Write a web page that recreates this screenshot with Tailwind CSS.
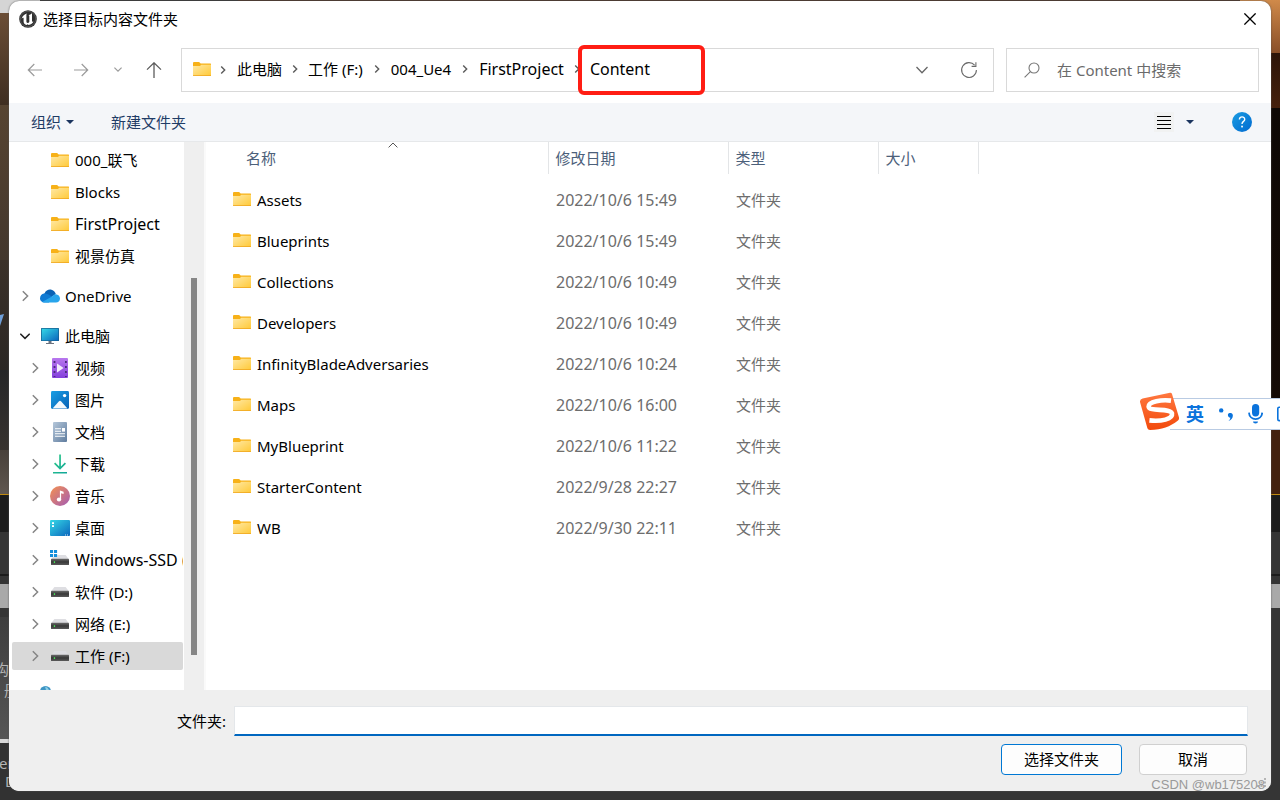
<!DOCTYPE html>
<html lang="zh-CN">
<head>
<meta charset="utf-8">
<meta name="viewport" content="width=device-width, initial-scale=1">
<title>选择目标内容文件夹</title>
<script src="https://cdn.jsdelivr.net/npm/@tailwindcss/browser@4"></script>
</head>
<body class="relative h-screen overflow-hidden bg-[#353535] font-['Noto_Sans','Noto_Sans_CJK_SC',sans-serif] text-[15px] leading-5 text-black">

<svg class="absolute size-0" aria-hidden="true">
  <defs>
    <linearGradient id="gFolder" x1="0" y1="0" x2="1" y2="1"><stop offset="0" stop-color="#ffe9a6"/><stop offset="1" stop-color="#ffc937"/></linearGradient>
    <linearGradient id="gScreen" x1="0" y1="0" x2="1" y2="1"><stop offset="0" stop-color="#35d8e6"/><stop offset="1" stop-color="#0b66bd"/></linearGradient>
    <linearGradient id="gVideo" x1="0" y1="0" x2="0" y2="1"><stop offset="0" stop-color="#b877ee"/><stop offset="1" stop-color="#8440dc"/></linearGradient>
    <linearGradient id="gPic" x1="0" y1="0" x2="1" y2="1"><stop offset="0" stop-color="#1a9fe4"/><stop offset="1" stop-color="#0560b6"/></linearGradient>
    <linearGradient id="gDoc" x1="0" y1="0" x2="1" y2="1"><stop offset="0" stop-color="#b5c7da"/><stop offset="1" stop-color="#5f7c9e"/></linearGradient>
    <linearGradient id="gDown" x1="0" y1="0" x2="1" y2="1"><stop offset="0" stop-color="#2fcb86"/><stop offset="1" stop-color="#0fa59a"/></linearGradient>
    <linearGradient id="gMusic" x1="0" y1="0" x2="1" y2="1"><stop offset="0" stop-color="#f5914f"/><stop offset="1" stop-color="#a35bb5"/></linearGradient>
    <linearGradient id="gDrive" x1="0" y1="0" x2="0" y2="1"><stop offset="0" stop-color="#6a6a6a"/><stop offset="0.5" stop-color="#383838"/><stop offset="1" stop-color="#5a5a5a"/></linearGradient>
    <linearGradient id="gHelp" x1="0" y1="0" x2="1" y2="1"><stop offset="0" stop-color="#1b9de2"/><stop offset="1" stop-color="#0069d0"/></linearGradient>
    <linearGradient id="gSogou" x1="0" y1="0" x2="0" y2="1"><stop offset="0" stop-color="#ff7840"/><stop offset="1" stop-color="#f24a0c"/></linearGradient>
    <symbol id="folder" viewBox="0 0 18 14">
      <path d="M0 1Q0 0 1 0H5.6Q6.3 0 6.8 .6L7.6 1.6H17.5Q18 1.6 18 2.2V4H0Z" fill="#f7b118"/>
      <path d="M0 4H6.2Q7 4 7.5 3.4L8.2 2.7H18V14H0Z" fill="url(#gFolder)"/>
      <path d="M0 13.2H18V13.5Q18 14 17.5 14H.5Q0 14 0 13.5Z" fill="#f0a51e"/>
    </symbol>
    <symbol id="right" viewBox="0 0 10 12"><path d="M2.8 1.3L7.6 6L2.8 10.7" fill="none" stroke="#858585" stroke-width="1.5"/></symbol>
    <symbol id="crumb" viewBox="0 0 6 10"><path d="M1.2 1.5L4.7 5L1.2 8.5" fill="none" stroke="#5a5a5a" stroke-width="1.4"/></symbol>
    <symbol id="drive" viewBox="0 0 18 10"><path d="M3.4 0H14.6L18 4.4H0Z" fill="#dedee2"/><rect y="3.8" width="18" height="6.2" rx="0.6" fill="url(#gDrive)"/><rect x="2.8" y="6.3" width="1.3" height="1.6" fill="#49f05a"/></symbol>
  </defs>
</svg>

<!-- editor window behind the dialog, visible at both edges -->
<div class="absolute inset-0 flex justify-between overflow-hidden text-[#b5b5b5]" aria-hidden="true">
  <div class="flex w-10 flex-col">
    <div class="h-[13px] bg-[#d5d5d5]"></div>
    <div class="h-[92px] bg-linear-to-b from-[#6b4e36] to-[#3f2e21]"></div>
    <div class="h-[155px] bg-linear-to-b from-[#574431] to-[#43372d]"></div>
    <div class="h-[110px] bg-linear-to-b from-[#3b3129] to-[#2b2724]"></div>
    <div class="h-[80px] bg-linear-to-b from-[#252628] to-[#38332f]"></div>
    <div class="h-[44px] bg-linear-to-b from-[#48403a] to-[#5f564f]"></div>
    <div class="h-px bg-[#c08a10]"></div>
    <div class="h-[37px] bg-[#1c1c1c]"></div>
    <div class="h-[42px] bg-[#353535]"></div>
    <div class="h-[2px] bg-[#1c1c1c]"></div>
    <div class="h-[8px] bg-[#353535]"></div>
    <div class="h-[24px] bg-[#a9a9a9]"></div>
    <div class="h-[9px] bg-[#353535]"></div>
    <div class="h-[122px] bg-linear-to-b from-[#3e3e3e] to-[#555555]"></div>
    <div class="h-[4px] bg-[#d8d8d8]"></div>
    <div class="grow bg-[#323232]"></div>
  </div>
  <div class="flex w-10 flex-col">
    <div class="h-[53px] bg-linear-to-b from-[#d08a4a] to-[#8a4f28]"></div>
    <div class="h-[55px] bg-linear-to-b from-[#2c1408] to-[#46200c]"></div>
    <div class="h-[290px] bg-linear-to-b from-[#0e0805] to-[#150b06]"></div>
    <div class="h-[96px] bg-[#43210f]"></div>
    <div class="h-px bg-[#c08a10]"></div>
    <div class="h-[37px] bg-[#1c1c1c]"></div>
    <div class="h-[42px] bg-[#353535]"></div>
    <div class="h-[2px] bg-[#1c1c1c]"></div>
    <div class="h-[8px] bg-[#353535]"></div>
    <div class="h-[24px] bg-[#a9a9a9]"></div>
    <div class="grow bg-[#353535]"></div>
  </div>
  <svg class="absolute left-0 top-[314px] h-3 w-1" viewBox="0 0 4 12"><path d="M0 1L4 0L0 12Z" fill="#6f9fd8"/></svg>
  <span class="absolute left-[-6px] top-[659px]">构</span>
  <span class="absolute left-1 top-[680px]">册</span>
  <span class="absolute left-[-1px] top-[753px]">en</span>
  <span class="absolute left-[5px] top-[771px]">D</span>
</div>
<div class="absolute left-[238px] top-0 h-px w-[1002px] bg-[#4a3328]" aria-hidden="true"></div>

<div class="relative h-full px-[9px] pb-[9px] pt-px">
<main class="flex h-full flex-col overflow-hidden rounded-[10px] bg-white shadow-[0_0_2px_#555]">

  <header class="flex h-[37px] shrink-0 items-center pb-[2px] pl-[10px] pr-[14px]">
    <svg class="size-[18px]" viewBox="0 0 18 18" aria-hidden="true">
      <circle cx="9" cy="9" r="8.8" fill="#303030"/><circle cx="9" cy="9" r="7.7" fill="none" stroke="#777" stroke-width=".5"/>
      <path d="M2.5 9.2C3.2 6.2 5.2 4.2 8.2 3.6C7.5 4.2 7.4 4.7 7.4 5.4V11.6C7.4 12.5 7.8 13 8.6 13C9.4 13 9.9 12.6 10.3 12.1V6C10.3 5.4 10 5.2 9.3 5.2C10.8 4.7 12 4.1 13 3.2V11C13 11.8 13.4 12 14.6 11.6C13.6 13.4 12 14.9 9.6 15L8.6 14.2L7.6 15C5.6 14.6 4.6 13.3 4.6 11.6V8.2C4.6 7.4 3.4 7.6 2.5 9.2Z" fill="#fff"/>
    </svg>
    <h1 class="ml-[6px]">选择目标内容文件夹</h1>
    <button class="ml-auto p-[1px]" aria-label="关闭"><svg class="size-3" viewBox="0 0 12 12"><path d="M.4 .4L11.6 11.6M11.6 .4L.4 11.6" stroke="#000" stroke-width="1.3"/></svg></button>
  </header>

  <div class="flex h-[65px] shrink-0 items-start pl-[18px] pr-3 pt-[10px]">
    <nav class="flex h-11 items-center" aria-label="导航">
      <button aria-label="后退"><svg class="h-4 w-4" viewBox="0 0 16 16"><path d="M7.3 2L1.3 8L7.3 14M1.3 8H15" fill="none" stroke="#9b9b9b" stroke-width="1.2"/></svg></button>
      <button class="ml-[30px]" aria-label="前进"><svg class="h-4 w-4" viewBox="0 0 16 16"><path d="M8.7 2L14.7 8L8.7 14M14.7 8H1" fill="none" stroke="#9b9b9b" stroke-width="1.2"/></svg></button>
      <button class="ml-[25px]" aria-label="最近位置"><svg class="h-2 w-2" viewBox="0 0 8 8"><path d="M.4 1.6L4 5.2L7.6 1.6" fill="none" stroke="#9b9b9b" stroke-width="1.2"/></svg></button>
      <button class="ml-6" aria-label="上移"><svg class="h-4 w-4" viewBox="0 0 16 16"><path d="M1 7.6L8 .8L15 7.6M8 .8V16" fill="none" stroke="#5c5c5c" stroke-width="1.3"/></svg></button>
    </nav>
    <div class="ml-[19px] flex h-11 min-w-0 flex-1 items-center border border-[#d9d9d9] pl-[11px] pr-[15px]">
      <svg class="mb-[2px] h-[14px] w-[18px]" aria-hidden="true"><use href="#folder"/></svg>
      <svg class="ml-[9px] h-[10px] w-[6px]" aria-hidden="true"><use href="#crumb"/></svg>
      <ol class="ml-[11px] flex items-center whitespace-nowrap pb-[2px]">
        <li><a href="#">此电脑</a></li>
        <li class="flex items-center"><svg class="mx-[10px] h-[10px] w-[6px]" aria-hidden="true"><use href="#crumb"/></svg><a href="#">工作 (F:)</a></li>
        <li class="flex items-center"><svg class="mx-[11px] h-[10px] w-[6px]" aria-hidden="true"><use href="#crumb"/></svg><a href="#">004_Ue4</a></li>
        <li class="flex items-center"><svg class="mx-[11px] h-[10px] w-[6px]" aria-hidden="true"><use href="#crumb"/></svg><a href="#" class="text-[16px]">FirstProject</a></li>
        <li class="relative flex items-center"><svg class="mx-[10px] h-[10px] w-[6px]" aria-hidden="true"><use href="#crumb"/></svg><a href="#" class="text-[16px]">Content</a>
          <span class="pointer-events-none absolute left-[14px] top-[-14px] h-[50px] w-[127px] rounded-[6px] border-4 border-[#ff1d14]"></span></li>
      </ol>
      <button class="ml-auto" aria-label="展开地址"><svg class="h-2 w-3" viewBox="0 0 12 8"><path d="M.5 1L6 6.7L11.5 1" fill="none" stroke="#666" stroke-width="1.3"/></svg></button>
      <button class="ml-8" aria-label="刷新"><svg class="size-[18px]" viewBox="0 0 18 18"><path d="M14.6 4.2A7.4 7.4 0 1 0 16.4 9M15.9 1.2V5.4H11.6" fill="none" stroke="#6b6b6b" stroke-width="1.1"/></svg></button>
    </div>
    <label class="ml-3 flex h-11 w-[253px] shrink-0 items-center border border-[#d9d9d9] pl-[17px]">
      <svg class="size-4" viewBox="0 0 16 16" aria-hidden="true"><circle cx="10" cy="6" r="5" fill="none" stroke="#777" stroke-width="1.1"/><path d="M6.4 9.6L.6 15.4" stroke="#777" stroke-width="1.1"/></svg>
      <input type="search" aria-label="搜索" placeholder="在 Content 中搜索" class="ml-[17px] min-w-0 flex-1 outline-none placeholder:text-[#6b6b6b]">
    </label>
  </div>

  <div class="flex h-[39px] shrink-0 items-center border-b border-[#e6e8ea] bg-[#f4f6f9] pl-[22px] pr-[19px] text-[#1f3c66]">
    <button class="flex items-center">组织<svg class="ml-[5px] h-1 w-2" viewBox="0 0 8 4" aria-hidden="true"><path d="M0 0H8L4 4Z" fill="#1b355f"/></svg></button>
    <button class="ml-[37px]">新建文件夹</button>
    <button class="ml-auto bg-[#f1f2f2] px-[3px] py-[2px]" aria-label="更改视图"><svg class="h-4 w-[14px]" viewBox="0 0 14 16"><path d="M0 2.5H14M0 6.5H14M0 10.5H14M0 14.5H14" stroke="#000"/></svg></button>
    <button class="ml-[10px] p-0.5" aria-label="更多视图选项"><svg class="h-1 w-2" viewBox="0 0 8 4"><path d="M0 0H8L4 4Z" fill="#1b355f"/></svg></button>
    <button class="ml-9" aria-label="帮助"><svg class="size-5" viewBox="0 0 20 20"><circle cx="10" cy="10" r="10" fill="url(#gHelp)"/><path d="M7.4 7.5C7.4 3.9 12.7 4 12.7 7.4C12.7 9.4 10 9.4 10 12" fill="none" stroke="#fff" stroke-width="1.4"/><rect x="9.2" y="13.7" width="1.7" height="1.7" fill="#fff"/></svg></button>
  </div>

  <div class="flex min-h-0 flex-1">
    <aside class="w-[175px] shrink-0 overflow-hidden pt-[2px]">
      <ul class="whitespace-nowrap">
        <li><a href="#" class="mx-[3px] my-[2px] flex h-7 items-center pl-[39px]"><svg class="h-[14px] w-[18px] shrink-0"><use href="#folder"/></svg><span class="ml-[6px]">000_联飞</span></a></li>
        <li class="pt-0.5"><a href="#" class="mx-[3px] mb-[2px] flex h-7 items-center pl-[39px]"><svg class="h-[14px] w-[18px] shrink-0"><use href="#folder"/></svg><span class="ml-[6px]">Blocks</span></a></li>
        <li class="pt-0.5"><a href="#" class="mx-[3px] mb-[2px] flex h-7 items-center pl-[39px]"><svg class="h-[14px] w-[18px] shrink-0"><use href="#folder"/></svg><span class="ml-[6px] text-[16px]">FirstProject</span></a></li>
        <li class="pt-0.5"><a href="#" class="mx-[3px] mb-[2px] flex h-7 items-center pl-[39px]"><svg class="h-[14px] w-[18px] shrink-0"><use href="#folder"/></svg><span class="ml-[6px]">视景仿真</span></a></li>
        <li class="pt-[10px]"><a href="#" class="mx-[3px] mb-[2px] flex h-7 items-center pl-2"><svg class="h-3 w-[10px] shrink-0"><use href="#right"/></svg>
          <svg class="ml-[10px] h-[14px] w-5 shrink-0" viewBox="0 0 20 14"><path d="M4.5 4.5C6 1 9 .2 11.5 .8C14 1.4 15.3 3.4 15.8 5L10 9L3 6Z" fill="#0a62b5"/><path d="M4.2 13.5C1.2 13.3 0 11.2 0 9.2C0 6.8 1.8 5 4 4.6C6.4 4.2 8 5 12 7.6L9 13.5Z" fill="#0f7ad3"/><path d="M12 7.6C13.2 6 14.4 5.2 15.8 5.2C18.2 5.3 20 7.2 20 9.4C20 11.8 18.2 13.5 16 13.5H4.5C3.6 13.5 2.8 13.2 2.2 12.9Z" fill="#28a5ec"/></svg>
          <span class="ml-[5px]">OneDrive</span></a></li>
        <li class="pt-[10px]"><a href="#" class="mx-[3px] mb-[2px] flex h-7 items-center pl-2"><svg class="h-[10px] w-[10px] shrink-0" viewBox="0 0 10 10"><path d="M.3 2.8L5 7.4L9.7 2.8" fill="none" stroke="#222" stroke-width="1.5"/></svg>
          <svg class="ml-[10px] h-[18px] w-5 shrink-0" viewBox="0 0 20 18"><rect x="1" y="1" width="18" height="13" rx=".6" fill="#155d8c"/><rect x="1.7" y="1.7" width="16.6" height="11.8" fill="url(#gScreen)"/><path d="M8.5 14H11.5V16H14V17H6V16H8.5Z" fill="#6b7380"/></svg>
          <span class="ml-[5px]">此电脑</span></a></li>
        <li class="pt-0.5"><a href="#" class="mx-[3px] mb-[2px] flex h-7 items-center pl-[18px]"><svg class="h-3 w-[10px] shrink-0"><use href="#right"/></svg>
          <svg class="ml-[10px] size-5 shrink-0" viewBox="0 0 20 20"><rect x="2" width="16" height="20" rx="1" fill="url(#gVideo)"/><path d="M4.5 3V19M15.9 3V19" stroke="#4b2a7c" stroke-width="1.8" stroke-dasharray="2 3"/><path d="M7 5.5V14.5L13.6 10Z" fill="#f3ecfb"/></svg>
          <span class="ml-[5px]">视频</span></a></li>
        <li class="pt-0.5"><a href="#" class="mx-[3px] mb-[2px] flex h-7 items-center pl-[18px]"><svg class="h-3 w-[10px] shrink-0"><use href="#right"/></svg>
          <svg class="ml-[10px] size-5 shrink-0" viewBox="0 0 20 20"><rect x="1" y="1" width="18" height="18" rx="1.4" fill="url(#gPic)"/><path d="M2.5 18.4L9 11.2Q10 10.2 11 11.2L17.5 18.4Z" fill="#f2f8fd"/><circle cx="14.6" cy="5.6" r="1.7" fill="#fff"/></svg>
          <span class="ml-[5px]">图片</span></a></li>
        <li class="pt-0.5"><a href="#" class="mx-[3px] mb-[2px] flex h-7 items-center pl-[18px]"><svg class="h-3 w-[10px] shrink-0"><use href="#right"/></svg>
          <svg class="ml-[10px] size-5 shrink-0" viewBox="0 0 20 20"><rect x="3" y="0" width="14" height="20" rx="1" fill="url(#gDoc)"/><path d="M5 6.7H11M5 9.3H11M5 11.8H15M5 14.2H15" stroke="#fff" stroke-width="1.1"/><rect x="12" y="6" width="3" height="3.6" fill="#fff"/></svg>
          <span class="ml-[5px]">文档</span></a></li>
        <li class="pt-0.5"><a href="#" class="mx-[3px] mb-[2px] flex h-7 items-center pl-[18px]"><svg class="h-3 w-[10px] shrink-0"><use href="#right"/></svg>
          <svg class="ml-[10px] size-5 shrink-0" viewBox="0 0 20 20"><path d="M9.2 .5H10.9V12.4L14.8 8.6L16 9.8L10 15.8L4 9.8L5.2 8.6L9.2 12.4ZM3 18H17V19.6H3Z" fill="url(#gDown)"/></svg>
          <span class="ml-[5px]">下载</span></a></li>
        <li class="pt-0.5"><a href="#" class="mx-[3px] mb-[2px] flex h-7 items-center pl-[18px]"><svg class="h-3 w-[10px] shrink-0"><use href="#right"/></svg>
          <svg class="ml-[10px] size-5 shrink-0" viewBox="0 0 20 20"><circle cx="10" cy="10" r="10" fill="url(#gMusic)"/><ellipse cx="9" cy="13.4" rx="2.2" ry="2" fill="#fff"/><path d="M9.9 13.4V4.6L13.6 5.8V8L11.1 7.3V13.4Z" fill="#fff"/></svg>
          <span class="ml-[5px]">音乐</span></a></li>
        <li class="pt-0.5"><a href="#" class="mx-[3px] mb-[2px] flex h-7 items-center pl-[18px]"><svg class="h-3 w-[10px] shrink-0"><use href="#right"/></svg>
          <svg class="ml-[10px] size-5 shrink-0" viewBox="0 0 20 20"><rect y="2" width="20" height="16" rx="1" fill="url(#gScreen)"/><path d="M2 4.2H4V6H2ZM2 7.2H4V9H2Z" fill="#fff"/><path d="M15 17H16M17 17H18" stroke="#fff" stroke-width=".8"/></svg>
          <span class="ml-[5px]">桌面</span></a></li>
        <li class="pt-0.5"><a href="#" class="mb-[2px] ml-[3px] mr-px flex h-7 items-center overflow-hidden pl-[18px]"><svg class="h-3 w-[10px] shrink-0"><use href="#right"/></svg>
          <svg class="ml-[10px] size-5 shrink-0" viewBox="0 0 20 20"><use href="#drive" x="1" y="5" width="18" height="10"/><path d="M0 -1H7.2V7H0Z" fill="#fff"/><path d="M0 0H3.1V3.1H0ZM4 0H7.1V3.1H4ZM0 4H3.1V7.1H0ZM4 4H7.1V7.1H4Z" fill="#138fdc"/></svg>
          <span class="ml-[5px] text-[16px]">Windows-SSD (C:)</span></a></li>
        <li class="pt-0.5"><a href="#" class="mx-[3px] mb-[2px] flex h-7 items-center pl-[18px]"><svg class="h-3 w-[10px] shrink-0"><use href="#right"/></svg><svg class="ml-[11px] h-[10px] w-[18px] shrink-0"><use href="#drive"/></svg><span class="ml-[6px]">软件 (D:)</span></a></li>
        <li class="pt-0.5"><a href="#" class="mx-[3px] mb-[2px] flex h-7 items-center pl-[18px]"><svg class="h-3 w-[10px] shrink-0"><use href="#right"/></svg><svg class="ml-[11px] h-[10px] w-[18px] shrink-0"><use href="#drive"/></svg><span class="ml-[6px]">网络 (E:)</span></a></li>
        <li class="pt-0.5"><a href="#" aria-current="true" class="ml-[3px] mr-px mb-[2px] flex h-7 items-center rounded-[2px] bg-[#d9d9d9] pl-[18px]"><svg class="h-3 w-[10px] shrink-0"><use href="#right"/></svg><svg class="ml-[11px] h-[10px] w-[18px] shrink-0"><use href="#drive"/></svg><span class="ml-[6px]">工作 (F:)</span></a></li>
        <li class="pt-[10px]"><a href="#" aria-label="网络" class="mx-[3px] flex h-7 items-center pl-7"><svg class="size-5" viewBox="0 0 20 20"><circle cx="5.5" cy="5.5" r="5.5" fill="#3d95c4"/><path d="M5 .5Q8 1 9 4H6Z" fill="#8fd0e8"/></svg></a></li>
      </ul>
    </aside>
    <div class="flex w-5 shrink-0 justify-center bg-[#efefef] pt-[136px]"><div class="h-[377px] w-[6px] bg-[#868686]"></div></div>

    <section class="min-w-0 flex-1 border-l-2 border-[#fafafa]">
      <table class="w-full table-fixed border-collapse text-left">
        <colgroup><col class="w-[342px]"><col class="w-[180px]"><col class="w-[150px]"><col class="w-[100px]"><col></colgroup>
        <thead class="text-[#4c607a]">
          <tr class="h-8">
            <th class="relative border-r border-[#e3e5e7] pl-10 font-normal">名称<svg class="absolute left-[182px] top-0 h-[6px] w-[10px]" viewBox="0 0 10 6" aria-hidden="true"><path d="M.6 5.4L5 1L9.4 5.4" fill="none" stroke="#555" stroke-width="1"/></svg></th>
            <th class="border-r border-[#e3e5e7] pl-[7px] font-normal">修改日期</th>
            <th class="border-r border-[#e3e5e7] pl-[7px] font-normal">类型</th>
            <th class="border-r border-[#e3e5e7] pl-[7px] font-normal">大小</th>
            <td></td>
          </tr>
        </thead>
        <tbody class="text-[#6d6d6d]">
          <tr class="h-[5px]" aria-hidden="true"><td colspan="5"></td></tr>
          <tr class="h-[41px]"><td class="pl-[27px]"><a href="#" class="flex items-center text-black"><svg class="mb-px mr-[6px] h-[14px] w-[18px]"><use href="#folder"/></svg>Assets</a></td><td class="pl-2 text-[16px]">2022/10/6 15:49</td><td class="pl-2">文件夹</td><td></td><td></td></tr>
          <tr class="h-[41px]"><td class="pl-[27px]"><a href="#" class="flex items-center text-black"><svg class="mb-px mr-[6px] h-[14px] w-[18px]"><use href="#folder"/></svg>Blueprints</a></td><td class="pl-2 text-[16px]">2022/10/6 15:49</td><td class="pl-2">文件夹</td><td></td><td></td></tr>
          <tr class="h-[41px]"><td class="pl-[27px]"><a href="#" class="flex items-center text-black"><svg class="mb-px mr-[6px] h-[14px] w-[18px]"><use href="#folder"/></svg>Collections</a></td><td class="pl-2 text-[16px]">2022/10/6 10:49</td><td class="pl-2">文件夹</td><td></td><td></td></tr>
          <tr class="h-[41px]"><td class="pl-[27px]"><a href="#" class="flex items-center text-black"><svg class="mb-px mr-[6px] h-[14px] w-[18px]"><use href="#folder"/></svg>Developers</a></td><td class="pl-2 text-[16px]">2022/10/6 10:49</td><td class="pl-2">文件夹</td><td></td><td></td></tr>
          <tr class="h-[41px]"><td class="pl-[27px]"><a href="#" class="flex items-center text-black"><svg class="mb-px mr-[6px] h-[14px] w-[18px]"><use href="#folder"/></svg>InfinityBladeAdversaries</a></td><td class="pl-2 text-[16px]">2022/10/6 10:24</td><td class="pl-2">文件夹</td><td></td><td></td></tr>
          <tr class="h-[41px]"><td class="pl-[27px]"><a href="#" class="flex items-center text-black"><svg class="mb-px mr-[6px] h-[14px] w-[18px]"><use href="#folder"/></svg>Maps</a></td><td class="pl-2 text-[16px]">2022/10/6 16:00</td><td class="pl-2">文件夹</td><td></td><td></td></tr>
          <tr class="h-[41px]"><td class="pl-[27px]"><a href="#" class="flex items-center text-black"><svg class="mb-px mr-[6px] h-[14px] w-[18px]"><use href="#folder"/></svg>MyBlueprint</a></td><td class="pl-2 text-[16px]">2022/10/6 11:22</td><td class="pl-2">文件夹</td><td></td><td></td></tr>
          <tr class="h-[41px]"><td class="pl-[27px]"><a href="#" class="flex items-center text-black"><svg class="mb-px mr-[6px] h-[14px] w-[18px]"><use href="#folder"/></svg>StarterContent</a></td><td class="pl-2 text-[16px]">2022/9/28 22:27</td><td class="pl-2">文件夹</td><td></td><td></td></tr>
          <tr class="h-[41px]"><td class="pl-[27px]"><a href="#" class="flex items-center text-black"><svg class="mb-px mr-[6px] h-[14px] w-[18px]"><use href="#folder"/></svg>WB</a></td><td class="pl-2 text-[16px]">2022/9/30 22:11</td><td class="pl-2">文件夹</td><td></td><td></td></tr>
        </tbody>
      </table>
    </section>
  </div>

  <form class="shrink-0 bg-[#efefef] pb-4 pl-[168px] pr-6 pt-4">
    <div class="flex items-center">
      <label for="folder-name">文件夹:</label>
      <input id="folder-name" type="text" class="ml-2 mr-[-1px] h-[30px] min-w-0 flex-1 border border-b-2 border-[#e4e7ea] border-b-[#0067c0] bg-white px-1 outline-none">
    </div>
    <div class="mt-2 flex justify-end gap-[17px]">
      <button type="button" class="h-[31px] w-[121px] rounded-[4px] border border-[#0078d4] bg-[#fdfdfd] pb-[2px]">选择文件夹</button>
      <button type="button" class="h-[31px] w-[108px] rounded-[4px] border border-[#d0d0d0] bg-[#fdfdfd] pb-[2px]">取消</button>
    </div>
  </form>
</main>
</div>

<!-- input-method floating bar -->
<div class="absolute right-0 top-[398px] flex h-8 w-[110px] items-center overflow-hidden border-y border-[#b9cbe3] bg-white pl-4 text-[#0b73dc]">
  <span class="text-[18px] font-bold">英</span>
  <svg class="ml-[15px] h-4 w-[14px] shrink-0" viewBox="0 0 14 16" aria-hidden="true"><circle cx="2.2" cy="4.4" r="2.2" fill="#0b73dc"/><path d="M9 8.2C9.6 6.6 13.4 6.4 13.8 9C14.2 12 12.2 14.2 9.4 15C10.8 13.8 11.4 12.8 11.2 11.6C9.6 11.6 8.6 10 9 8.2Z" fill="#0b73dc"/></svg>
  <svg class="ml-[15px] h-5 w-[15px] shrink-0" viewBox="0 0 15 20" aria-hidden="true"><rect x="4" y="0" width="7.2" height="12.4" rx="3.6" fill="#0b73dc"/><path d="M1 8.6C1.4 17.2 13.8 17.2 14.2 8.6" fill="none" stroke="#0b73dc" stroke-width="1.8"/><path d="M5 17.6H10Q10 19.6 7.5 19.6Q5 19.6 5 17.6Z" fill="#0b73dc"/></svg>
  <svg class="ml-[14px] h-4 w-[18px] shrink-0" viewBox="0 0 18 16" aria-hidden="true"><rect x=".8" y="1.2" width="16.4" height="13.4" rx="1.4" fill="none" stroke="#0b73dc" stroke-width="1.6"/><path d="M3 5H15M3 8H15M3 11.4H15" stroke="#0b73dc" stroke-width="1.4"/></svg>
</div>
<svg class="absolute right-[100px] top-[392px] size-10" viewBox="0 0 40 40" aria-hidden="true">
  <path d="M2.6 6.6L30 .8Q31.6 .6 32 2L39 25.6Q39.4 27.4 38 28.4C30 34.6 22 37.6 10 38Q8 38 7.4 36.2L0 10Q-.2 7.4 2.6 6.6Z" fill="url(#gSogou)"/>
  <path d="M31 8.6C22 7.4 8.4 9.4 8.6 14.6C9 20 30.6 15.6 32 21.4C33 27.4 21 29.6 9.4 28.4" fill="none" stroke="#fff" stroke-width="4.6"/>
</svg>
<!-- resize grip and watermark -->
<svg class="absolute bottom-[12px] right-[13px] size-[10px]" viewBox="0 0 10 10" aria-hidden="true"><path d="M7 0H9V2H7ZM3.5 3.5H5.5V5.5H3.5ZM7 3.5H9V5.5H7ZM0 7H2V9H0ZM3.5 7H5.5V9H3.5ZM7 7H9V9H7Z" fill="#b5b5b5"/></svg>
<p class="absolute bottom-[5px] right-[15px] font-['Liberation_Sans',sans-serif] text-[13px] text-[#9a9a9a]">CSDN @wb175208</p>
</body>
</html>
